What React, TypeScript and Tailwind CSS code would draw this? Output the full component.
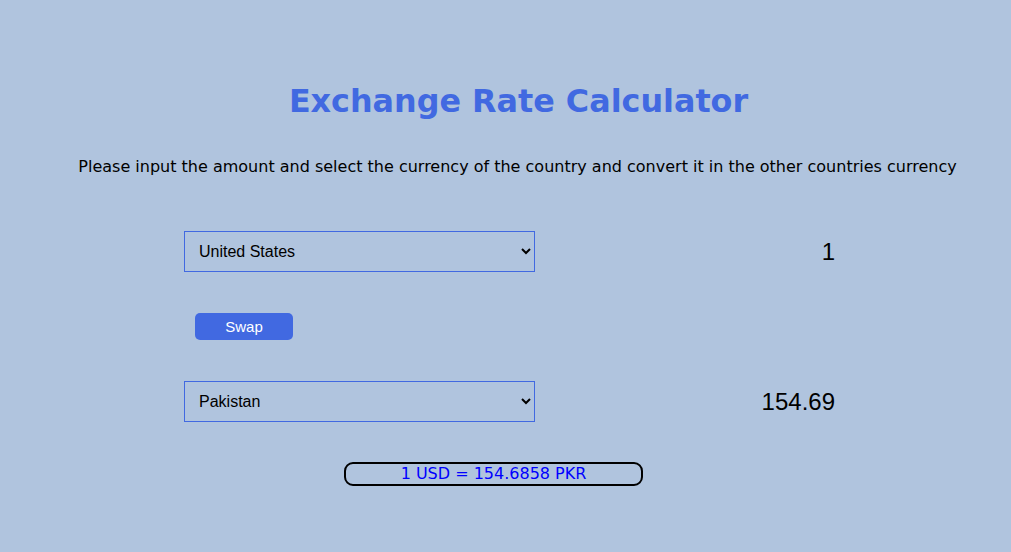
import React, { useState } from "react";

export default function App() {
  const [from, setFrom] = useState("USD");
  const [to, setTo] = useState("PKR");
  return (
    <div className="min-h-[552px] w-full bg-[#b0c4de] flex flex-col items-center pt-[78px]" style={{ fontFamily: '"DejaVu Sans", Verdana, sans-serif' }}>
      <h1 className="text-[31.8px] font-bold text-[#4169e1] leading-[46px] ml-[26px]">Exchange Rate Calculator</h1>
      <p className="mt-[32px] text-[16px] text-black ml-[24px] leading-[22px]">
        Please input the amount and select the currency of the country and convert it in the other countries currency
      </p>
      <div className="w-[651px] mt-[53px] ml-[8px] flex flex-col" style={{ fontFamily: '"Liberation Sans", Arial, sans-serif' }}>
        <div className="flex items-center justify-between h-[41px]">
          <select
            value={from}
            onChange={(e) => setFrom(e.target.value)}
            className="w-[351px] h-[41px] border border-[#4169e1] bg-transparent text-[16px] text-black pl-[10px] pr-[6px] outline-none"
            style={{ fontFamily: '"Liberation Sans", Arial, sans-serif' }}
          >
            <option value="USD">United States</option>
            <option value="PKR">Pakistan</option>
          </select>
          <input
            readOnly
            value="1"
            className="w-[120px] bg-transparent text-right text-[24px] text-black outline-none border-0 pr-[0px]"
          />
        </div>
        <div className="mt-[41px] ml-[11px]">
          <button className="w-[98px] h-[27px] rounded-[5px] bg-[#4169e1] text-white text-[15px] leading-[27px]">Swap</button>
        </div>
        <div className="mt-[41px] flex items-center justify-between h-[41px]">
          <select
            value={to}
            onChange={(e) => setTo(e.target.value)}
            className="w-[351px] h-[41px] border border-[#4169e1] bg-transparent text-[16px] text-black pl-[10px] pr-[6px] outline-none"
            style={{ fontFamily: '"Liberation Sans", Arial, sans-serif' }}
          >
            <option value="PKR">Pakistan</option>
            <option value="USD">United States</option>
          </select>
          <input
            readOnly
            value="154.69"
            className="w-[120px] bg-transparent text-right text-[24px] text-black outline-none border-0 pr-[0px]"
          />
        </div>
      </div>
      <div className="mt-[40px] ml-[-24px] w-[299px] h-[24px] border-2 border-black rounded-[9px] flex items-center justify-center text-[16px] text-[#0000ff] leading-none">
        1 USD = 154.6858 PKR
      </div>
    </div>
  );
}
